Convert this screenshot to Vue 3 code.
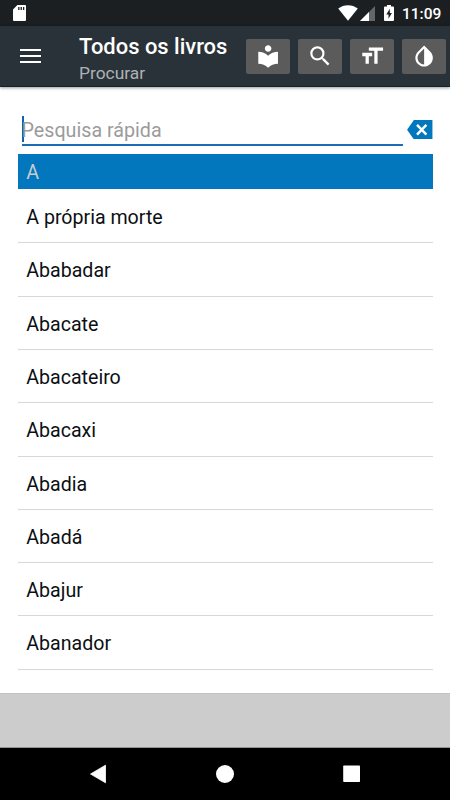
<script setup>
const actions = [
  { name: 'Biblioteca', d: 'M12 11.55C9.64 9.35 6.48 8 3 8v11c3.48 0 6.64 1.35 9 3.55 2.36-2.19 5.52-3.55 9-3.55V8c-3.48 0-6.64 1.35-9 3.55zM12 8c1.66 0 3-1.34 3-3s-1.34-3-3-3-3 1.34-3 3 1.34 3 3 3z' },
  { name: 'Buscar', d: 'M15.5 14h-.79l-.28-.27A6.471 6.471 0 0 0 16 9.5 6.5 6.5 0 1 0 9.5 16c1.61 0 3.09-.59 4.23-1.57l.27.28v.79l5 4.99L20.49 19l-4.99-5zm-6 0C7.01 14 5 11.99 5 9.5S7.01 5 9.5 5 14 7.01 14 9.5 11.99 14 9.5 14z' },
  { name: 'Tamanho do texto', d: 'M9 4v3h5v12h3V7h5V4H9zm-6 8h3v7h3v-7h3V9H3v3z' },
  { name: 'Inverter cores', d: 'M17.66 7.93L12 2.27 6.34 7.93c-3.12 3.12-3.12 8.19 0 11.31C7.9 20.8 9.95 21.58 12 21.58c2.05 0 4.1-.78 5.66-2.34 3.12-3.12 3.12-8.19 0-11.31zM12 19.59c-1.6 0-3.11-.62-4.24-1.76C6.62 16.69 6 15.19 6 13.59s.62-3.11 1.76-4.24L12 5.1v14.49z' },
]
const words = ['A própria morte', 'Ababadar', 'Abacate', 'Abacateiro', 'Abacaxi', 'Abadia', 'Abadá', 'Abajur', 'Abanador']
</script>

<template>
  <div class="screen">
    <div class="status">
      <svg class="sd" viewBox="0 0 13 16"><path fill="#fff" fill-rule="evenodd" d="M4.4 0H12q1 0 1 1v14q0 1-1 1H1q-1 0-1-1V4.6zM5.2 2v3h1.3V2zm2.4 0v3h1.3V2zM10 2v3h1.3V2z" /></svg>
      <svg class="wifi" viewBox="0 0 20 16"><path fill="#fff" d="M10 15.8L.2 3.6Q4.500 .2 10 .2t9.800 3.400z" /></svg>
      <svg class="signal" viewBox="0 0 15 15"><path fill="#61676b" d="M15 0v15H0z" /><path fill="#fff" d="M9 6v9H0z" /></svg>
      <svg class="battery" viewBox="0 0 10 16"><path fill="#fff" d="M3 0h4v1.600h2q1 0 1 1V15q0 1-1 1H1q-1 0-1-1V2.600q0-1 1-1h2z" /><path fill="#1b1f22" d="M5.800 3.800L2.300 9.500h2.200v4.300L7.900 8H5.800z" /></svg>
      <span class="clock">11:09</span>
    </div>
    <header class="toolbar">
      <div class="menu"><i></i><i></i><i></i></div>
      <div class="titles">
        <div class="title">Todos os livros</div>
        <div class="subtitle">Procurar</div>
      </div>
      <div class="actions">
        <button v-for="a in actions" :key="a.name" class="action" :aria-label="a.name">
          <svg viewBox="0 0 24 24"><path :d="a.d" fill="#fff" /></svg>
        </button>
      </div>
    </header>
    <main class="content">
      <div class="search">
        <div class="field"><span class="caret"></span><span class="hint">Pesquisa rápida</span></div>
        <svg class="clear" viewBox="0 0 26 20"><path fill="#0277bd" d="M7 0h19v20H7L0 10z" /><path stroke="#fff" stroke-width="2.500" d="M10.200 5l9.600 10M19.800 5l-9.600 10" /></svg>
      </div>
      <div class="section">A</div>
      <div v-for="w in words" :key="w" class="row">{{ w }}</div>
    </main>
    <div class="banner"></div>
    <nav class="nav">
      <svg viewBox="0 0 450 52"><path d="M90.500 26L105.500 17.200v17.600z" fill="#fff" stroke="#fff" stroke-linejoin="round" stroke-width=".8" /><circle cx="225" cy="26" r="9" fill="#fff" /><rect x="343.200" y="17.500" width="16.800" height="16.500" rx=".8" fill="#fff" /></svg>
    </nav>
  </div>
</template>

<style>
body { margin: 0; background: #fff; }
</style>

<style scoped>
.screen { width: 450px; height: 800px; display: flex; flex-direction: column; overflow: hidden; background: #fff; font-family: Roboto, sans-serif; }
.screen * { box-sizing: border-box; }
svg { display: block; flex: none; }
.status { height: 26px; flex: none; background: #1b1f22; display: flex; align-items: center; padding: 0 9px 0 13px; }
.sd { width: 13px; height: 16px; }
.wifi { width: 20px; height: 16px; margin-left: auto; }
.signal { width: 15px; height: 15px; margin-left: 2px; }
.battery { width: 10px; height: 16px; margin-left: 9px; }
.clock { color: #fff; font-size: 15.500px; font-weight: 500; line-height: 26px; margin-left: 8px; padding-top: 1px; width: 39px; white-space: nowrap; }
.toolbar { height: 61px; flex: none; background: #2a3239; border-bottom: 1px solid #13232d; display: flex; padding: 0 4px 0 20px; box-shadow: 0 1px 3px rgba(0, 0, 0, .4); z-index: 1; }
.menu { width: 21px; padding-top: 23px; display: flex; flex-direction: column; gap: 4px; }
.menu i { height: 2px; background: #fff; }
.titles { margin-left: 38px; padding-top: 8px; white-space: nowrap; }
.title { color: #fff; font-size: 21.950px; font-weight: 500; line-height: 26px; }
.subtitle { color: #aeb1b4; font-size: 17.400px; line-height: 22px; margin-top: 2px; }
.actions { margin-left: auto; padding-top: 13px; display: flex; gap: 8px; }
.action { width: 44px; height: 35px; border: 0; border-radius: 2px; padding: 0; background: #5b5b5c; display: flex; align-items: center; justify-content: center; }
.action svg { width: 26.250px; height: 26.250px; }
.content { height: 606px; flex: none; padding: 25px 17.500px 0; }
.search { height: 42px; display: flex; padding-left: 4px; }
.field { width: 381px; height: 34px; border-bottom: 2px solid #1b6db5; display: flex; align-items: center; padding-top: 2px; }
.caret { width: 2px; height: 26px; background: #0d62b5; margin-right: -2px; }
.hint { color: #9b9b9b; font-size: 19.700px; line-height: 28px; padding-top: 4px; white-space: nowrap; }
.clear { width: 25.500px; height: 19.500px; margin: 7.500px 0 0 4.500px; }
.section { height: 35.200px; background: #0277bd; color: #c6cbce; font-size: 19.700px; line-height: 38px; padding-left: 8.750px; }
.row { height: 53.333px; border-bottom: 1px solid #d8d8d8; color: #0c0f13; font-size: 19.600px; line-height: 56.400px; padding-left: 8.750px; }
.section + .row { height: 54px; line-height: 57.400px; }
.banner { height: 55px; flex: none; background: #ccc; border-top: 1px solid #c2c2c2; border-bottom: 1px solid #929292; }
.nav { height: 52px; background: #000; }
.nav svg { width: 450px; height: 52px; }
</style>
